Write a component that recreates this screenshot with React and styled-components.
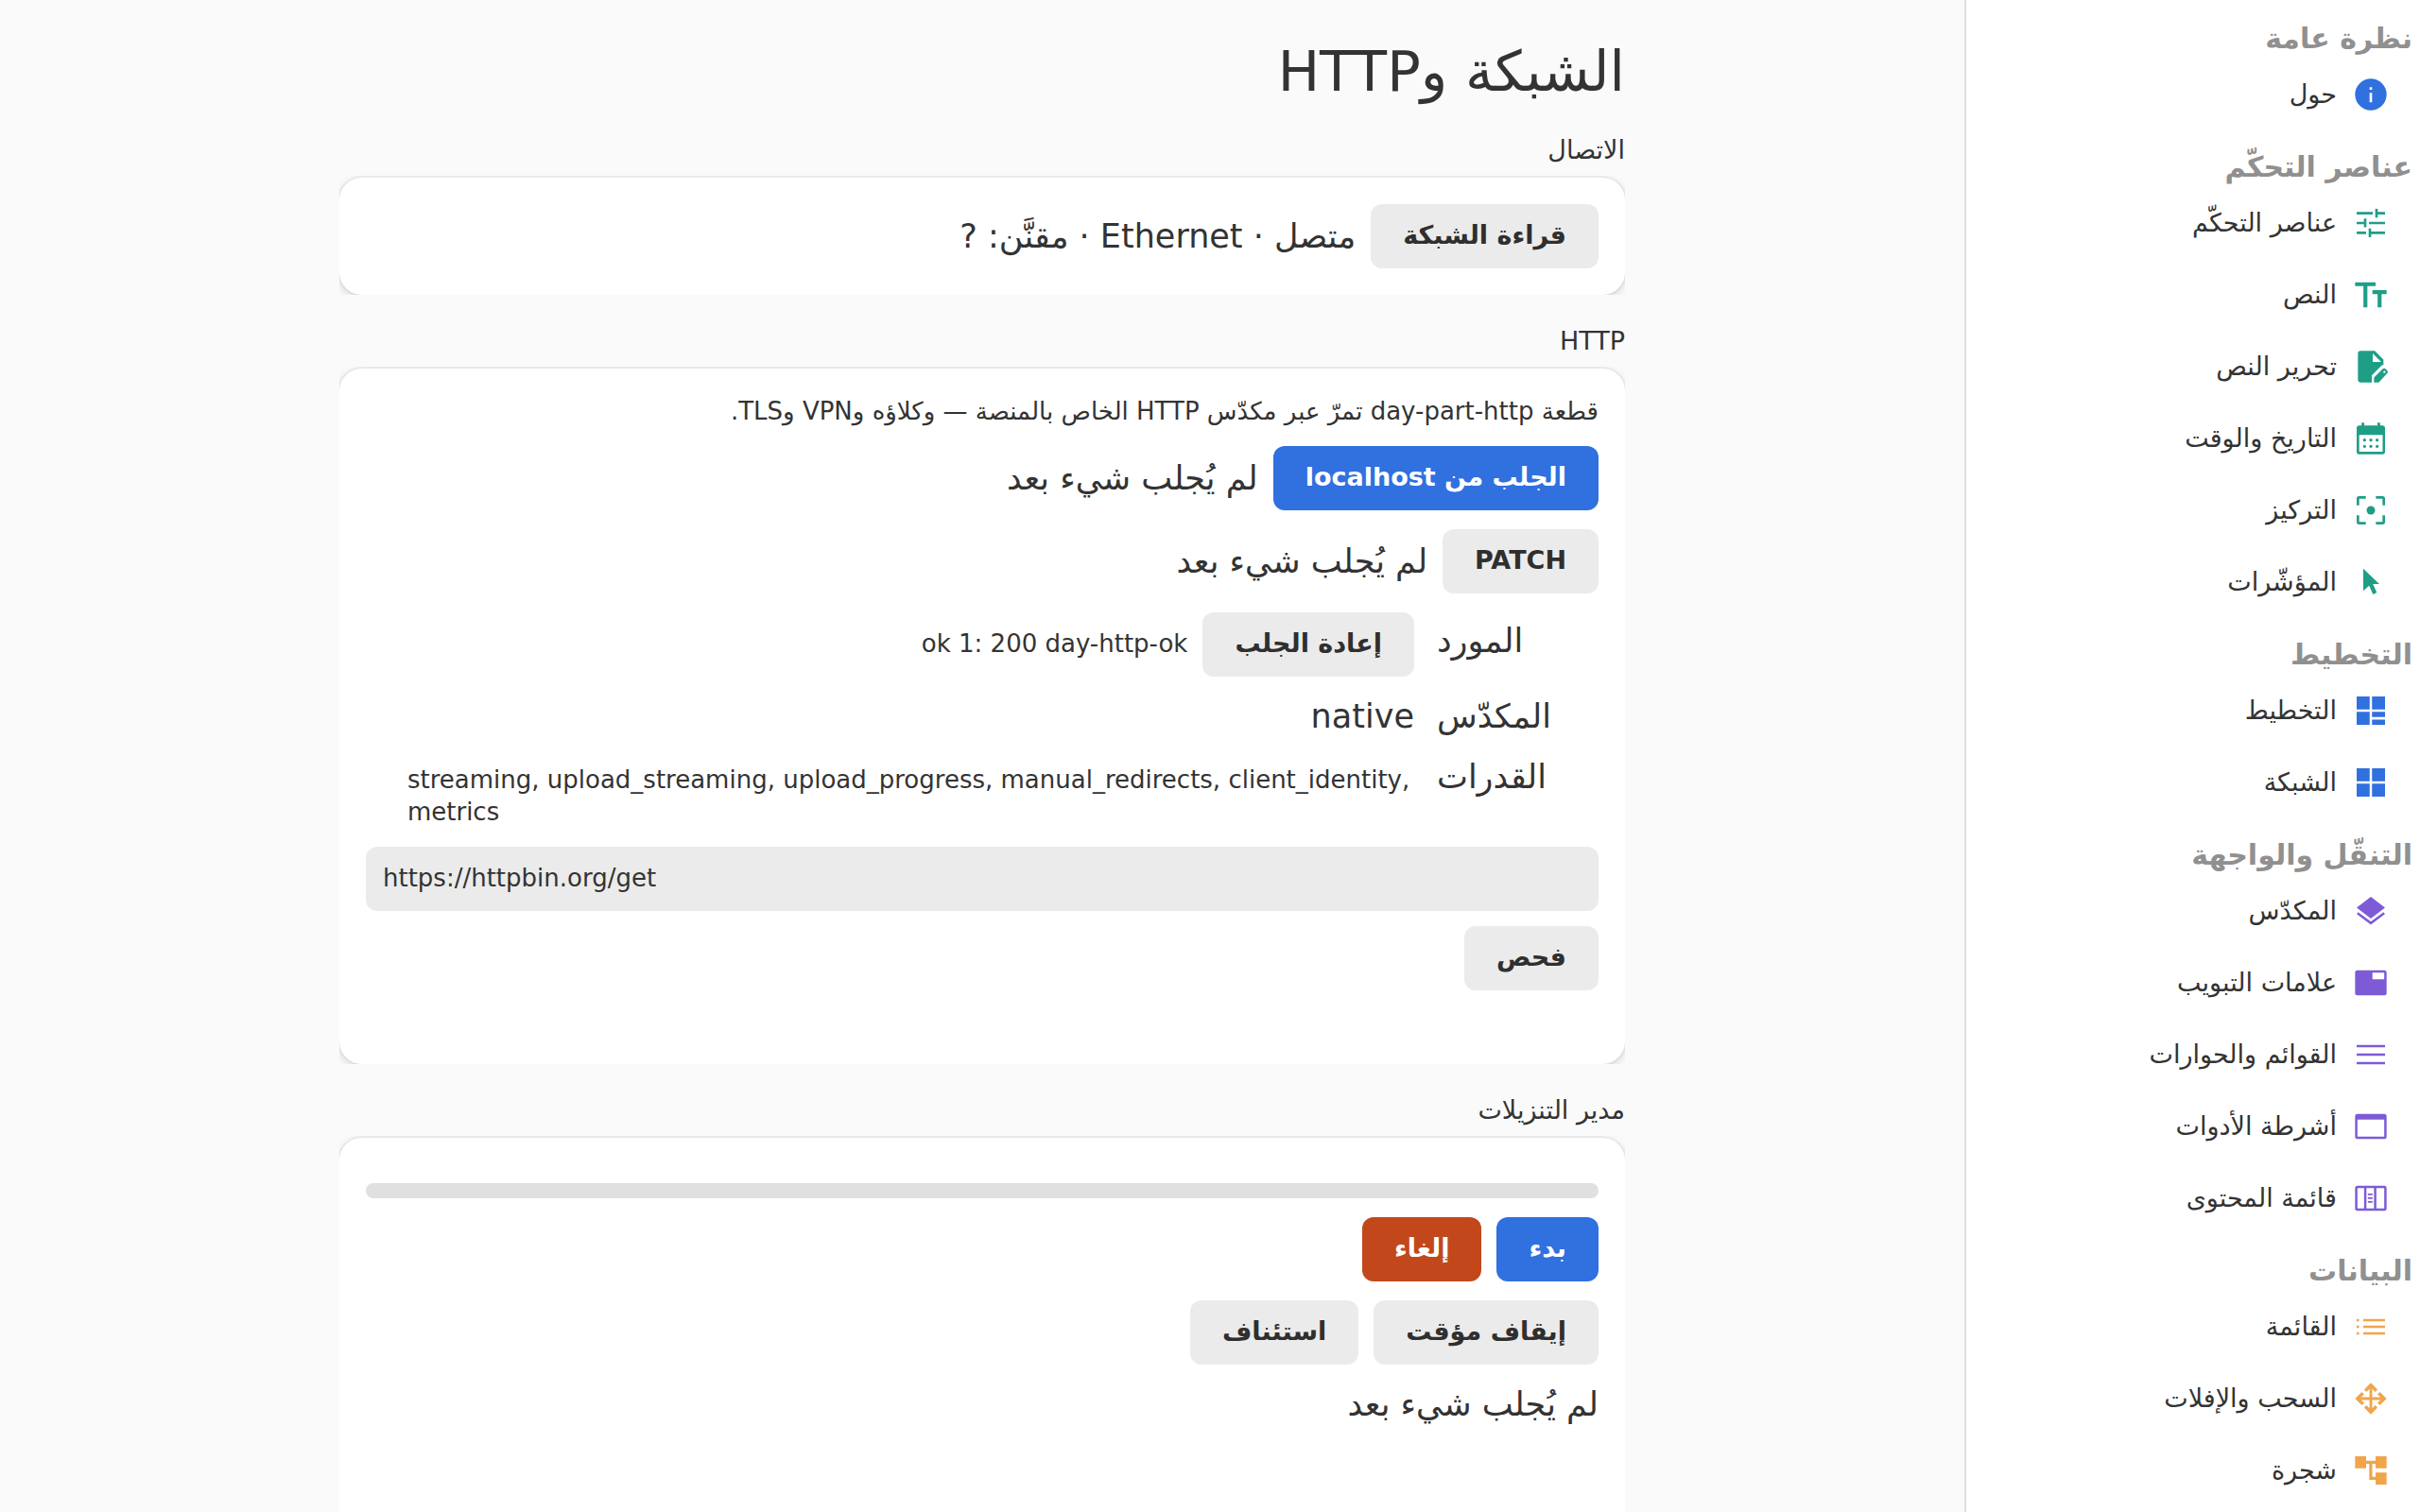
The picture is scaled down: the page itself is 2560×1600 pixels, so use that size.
import React, { useState } from 'react';
import styled, { createGlobalStyle } from 'styled-components';

const blue = '#3070df';
const green = '#1f9e87';
const purple = '#7d5bd7';
const orange = '#f0a54b';

const icons = {
  info: (
    <>
      <circle cx="12" cy="12" r="10" />
      <path fill="#fff" d="M11.2 11h1.6v6h-1.6zM11.2 7.4h1.6V9h-1.6z" />
    </>
  ),
  tune: (
    <path d="M3 5h10.2v1.6H3zM14.8 3h1.6v2H21v1.6h-4.6v2h-1.6zM3 11.2h4.6v-2h1.6v5.5H7.6v-1.9H3zM10.8 11.2H21v1.6H10.8zM3 17.4h6V19H3zM10.6 15.4h1.6v2H21V19h-8.8v2h-1.6z" />
  ),
  text: (
    <path d="M7.3 20V6.5H2V4h13v2.5H9.8V20zM16.3 20v-8.5H13V9h9v2.5h-3.2V20z" />
  ),
  editDocument: (
    <path
      fillRule="evenodd"
      d="M5.5 2h9L20 7.5v3.3c-.6.1-1.1.4-1.6.9l-5.8 5.9V22H5.5A1.7 1.7 0 0 1 3.8 20.3V3.7A1.7 1.7 0 0 1 5.5 2zM13.2 3.6V9h5.4zM14 22v-3.1l5.6-5.5c.5-.5 1.2-.5 1.7 0l1.1 1.1c.5.5.5 1.2 0 1.7L17 22zM20.5 16.2l.9-.9-.8-.8-.9.9z"
    />
  ),
  calendar: (
    <path
      fillRule="evenodd"
      d="M6.1 2h1.7v1.7h8.4V2h1.7v1.7h1.6A1.6 1.6 0 0 1 21 5.300v15.100a1.600 1.600 0 0 1-1.600 1.600H4.600A1.600 1.600 0 0 1 3 20.400V5.300a1.600 1.600 0 0 1 1.600-1.600h1.500zM4.600 9.700v10.700h14.900V9.700zM8 12a1 1 0 1 0 0 2 1 1 0 0 0 0-2zM12 12a1 1 0 1 0 0 2 1 1 0 0 0 0-2zM16 12a1 1 0 1 0 0 2 1 1 0 0 0 0-2zM8 16a1 1 0 1 0 0 2 1 1 0 0 0 0-2zM12 16a1 1 0 1 0 0 2 1 1 0 0 0 0-2zM16 16a1 1 0 1 0 0 2 1 1 0 0 0 0-2z"
    />
  ),
  focus: (
    <>
      <circle cx="12" cy="12" r="2.7" />
      <path
        fill="none"
        stroke="currentColor"
        strokeWidth="1.6"
        d="M3.8 8.8V4.6q0-.8.8-.8h4.2M15.2 3.8h4.2q.8 0 .8.8v4.2M20.2 15.2v4.2q0 .8-.8.8h-4.2M8.8 20.2H4.6q-.8 0-.8-.8v-4.2"
      />
    </>
  ),
  pointer: <path d="M7.2 3.4 17.4 13.2h-4.1l2.5 5.4-2.4 1.2-2.5-5.5-3.7 3.2z" />,
  dashboard: (
    <path d="M3 3h8.250v8.250H3zM12.750 3H21v8.250h-8.250zM3 12.750h8.250V21H3zM12.750 12.750H21V16h-8.250zM12.750 17.750H21V21h-8.250z" />
  ),
  grid: (
    <path d="M3 3h8.250v8.250H3zM12.750 3H21v8.250h-8.250zM3 12.750h8.250V21H3zM12.750 12.750H21V21h-8.250z" />
  ),
  layers: (
    <>
      <path d="m12 3 9 6.900-9 6.900-9-6.900z" />
      <path
        fill="none"
        stroke="currentColor"
        strokeWidth="1.5"
        d="m3.500 13.300 8.500 6.400 8.500-6.400"
      />
    </>
  ),
  tab: (
    <path
      fillRule="evenodd"
      d="M3.500 4h17A1.500 1.500 0 0 1 22 5.500v13a1.500 1.500 0 0 1-1.500 1.500h-17A1.500 1.500 0 0 1 2 18.500v-13A1.500 1.500 0 0 1 3.500 4zM13 5.500v4.300h7.500V5.500z"
    />
  ),
  menu: <path d="M3 5.900h18v1.500H3zM3 11.250h18v1.500H3zM3 16.600h18v1.500H3z" />,
  toolbar: (
    <path
      fillRule="evenodd"
      d="M3.500 4h17A1.500 1.500 0 0 1 22 5.500v13a1.500 1.500 0 0 1-1.500 1.500h-17A1.500 1.500 0 0 1 2 18.500v-13A1.500 1.500 0 0 1 3.500 4zM3.500 7.600v10.900h17V7.600z"
    />
  ),
  columns: (
    <path
      fillRule="evenodd"
      d="M3.500 4h17A1.500 1.500 0 0 1 22 5.500v13a1.500 1.500 0 0 1-1.500 1.500h-17A1.500 1.500 0 0 1 2 18.500v-13A1.500 1.500 0 0 1 3.500 4zM3.500 5.500v13h4.200v-13zM9.200 5.500v13H14v-13zM15.500 5.500v13h5v-13zM10.100 9h3v1.100h-3zM10.100 11.400h3v1.100h-3zM10.100 13.800h3v1.100h-3z"
    />
  ),
  list: (
    <path d="M3 7h1.500v1.500H3zM7.200 7H21v1.500H7.200zM3 11.250h1.500v1.500H3zM7.200 11.250H21v1.500H7.200zM3 15.500h1.500V17H3zM7.200 15.500H21V17H7.200z" />
  ),
  move: (
    <g fill="none" stroke="currentColor">
      <path strokeWidth="1.7" d="M12 3v18M3 12h18" />
      <path
        strokeWidth="2.1"
        d="M8.500 7 12 3.500 15.500 7M8.500 17l3.500 3.500 3.500-3.500M7 8.500 3.500 12 7 15.500M17 8.500l3.500 3.500-3.500 3.500"
      />
    </g>
  ),
  tree: (
    <path d="M2 3h7v2.900h6V3h7v7.700h-7V7.800h-2.100v8.300H15v-2.800h7V21h-7v-3h-4V7.800H9v2.900H2z" />
  ),
};

const sections = [
  {
    title: 'نظرة عامة',
    color: blue,
    items: [['info', 'حول']],
  },
  {
    title: 'عناصر التحكّم',
    color: green,
    items: [
      ['tune', 'عناصر التحكّم'],
      ['text', 'النص'],
      ['editDocument', 'تحرير النص'],
      ['calendar', 'التاريخ والوقت'],
      ['focus', 'التركيز'],
      ['pointer', 'المؤشّرات'],
    ],
  },
  {
    title: 'التخطيط',
    color: blue,
    items: [
      ['dashboard', 'التخطيط'],
      ['grid', 'الشبكة'],
    ],
  },
  {
    title: 'التنقّل والواجهة',
    color: purple,
    items: [
      ['layers', 'المكدّس'],
      ['tab', 'علامات التبويب'],
      ['menu', 'القوائم والحوارات'],
      ['toolbar', 'أشرطة الأدوات'],
      ['columns', 'قائمة المحتوى'],
    ],
  },
  {
    title: 'البيانات',
    color: orange,
    items: [
      ['list', 'القائمة'],
      ['move', 'السحب والإفلات'],
      ['tree', 'شجرة'],
    ],
  },
];

const nothingYet = 'لم يُجلب شيء بعد';

export default function App() {
  const [url, setUrl] = useState('https://httpbin.org/get');

  return (
    <>
      <GlobalStyle />
      <Window dir="rtl" lang="ar">
        <Sidebar>
          {sections.map((section) => (
            <section key={section.title}>
              <SectionTitle>{section.title}</SectionTitle>
              {section.items.map(([icon, label]) => (
                <NavItem key={icon} href={`#${icon}`}>
                  <Icon viewBox="0 0 24 24" $color={section.color} aria-hidden="true">
                    {icons[icon]}
                  </Icon>
                  {label}
                </NavItem>
              ))}
            </section>
          ))}
        </Sidebar>

        <Main>
          <Column>
            <Title>الشبكة وHTTP</Title>

            <Group>
              <Caption>الاتصال</Caption>
              <Card>
                <Row>
                  <Button>قراءة الشبكة</Button>
                  <Body>متصل · Ethernet · مقنَّن: ?</Body>
                </Row>
              </Card>
            </Group>

            <Group>
              <Caption>HTTP</Caption>
              <Card>
                <Small>
                  قطعة day-part-http تمرّ عبر مكدّس HTTP الخاص بالمنصة — وكلاؤه وVPN
                  وTLS.
                </Small>
                <Row>
                  <Button $variant="primary">الجلب من localhost</Button>
                  <Body>{nothingYet}</Body>
                </Row>
                <Row>
                  <Button>PATCH</Button>
                  <Body>{nothingYet}</Body>
                </Row>
                <Form>
                  <Term>المورد</Term>
                  <Value>
                    <Button>إعادة الجلب</Button>
                    <Small dir="ltr">ok 1: 200 day-http-ok</Small>
                  </Value>
                  <Term>المكدّس</Term>
                  <Value>
                    <Body>native</Body>
                  </Value>
                  <Term>القدرات</Term>
                  <Value>
                    <Small dir="ltr">
                      streaming, upload_streaming, upload_progress, manual_redirects,
                      client_identity, metrics
                    </Small>
                  </Value>
                </Form>
                <Probe>
                  <Input
                    dir="ltr"
                    type="text"
                    aria-label="URL"
                    value={url}
                    onChange={(e) => setUrl(e.target.value)}
                  />
                  <Row>
                    <Button>فحص</Button>
                  </Row>
                  <Small role="status" />
                </Probe>
              </Card>
            </Group>

            <Group>
              <Caption>مدير التنزيلات</Caption>
              <Card $tall>
                <Progress role="progressbar" aria-valuenow={0} />
                <Row>
                  <Button $variant="primary">بدء</Button>
                  <Button $variant="danger">إلغاء</Button>
                </Row>
                <Row>
                  <Button>إيقاف مؤقت</Button>
                  <Button>استئناف</Button>
                </Row>
                <Body>{nothingYet}</Body>
              </Card>
            </Group>
          </Column>
        </Main>
      </Window>
    </>
  );
}

const GlobalStyle = createGlobalStyle`
  * {
    box-sizing: border-box;
  }
  body {
    margin: 0;
    background: #fafafa;
    color: #333333;
    font-family: 'DejaVu Sans', sans-serif;
  }
  h1, h2, p, dl, dd {
    margin: 0;
  }
  button, input {
    font-family: inherit;
  }
`;

const Window = styled.div`
  display: flex;
  height: 100vh;
  overflow: hidden;
`;

const Sidebar = styled.nav`
  flex: 0 0 482px;
  padding-top: 2px;
  overflow: hidden;
  background: #ffffff;
  border-left: 2px solid #dedede;
`;

const SectionTitle = styled.h2`
  height: 60px;
  padding: 20px 8px 0;
  color: #909090;
  font-size: 30px;
  font-weight: bold;
  line-height: 38px;
`;

const NavItem = styled.a`
  display: flex;
  align-items: center;
  gap: 16px;
  height: 76px;
  padding: 0 32px;
  color: inherit;
  font-size: 27px;
  line-height: 34px;
  text-decoration: none;
`;

const Icon = styled.svg`
  width: 40px;
  height: 40px;
  color: ${(props) => props.$color};
  fill: currentColor;
`;

const Main = styled.main`
  flex: 1;
  min-width: 0;
  overflow: hidden;
`;

const Column = styled.div`
  display: flex;
  flex-direction: column;
  gap: 32px;
  max-width: 1360px;
  margin: 0 auto;
  padding-top: 42px;
`;

const Title = styled.h1`
  font-size: 59px;
  font-weight: normal;
  line-height: 68px;
`;

const Group = styled.section`
  display: flex;
  flex-direction: column;
  gap: 12px;
`;

const Caption = styled.h2`
  font-size: 27px;
  font-weight: normal;
  line-height: 34px;
`;

/* the shadow is cut at the sides and the bottom, only the corners keep it */
const Card = styled.div`
  display: flex;
  flex-direction: column;
  gap: 20px;
  padding: 28px;
  padding-bottom: ${(props) => (props.$tall ? '160px' : '28px')};
  background: #ffffff;
  border-radius: 24px;
  box-shadow: 0 0 0 2px rgba(0, 0, 0, 0.03), 0 2px 6px 2px rgba(0, 0, 0, 0.07),
    0 4px 12px 4px rgba(0, 0, 0, 0.03);
  clip-path: inset(-2px 0 0 0);
`;

const Row = styled.div`
  display: flex;
  align-items: center;
  gap: 16px;
`;

const Body = styled.p`
  font-size: 35px;
  line-height: 44px;
`;

const Small = styled.p`
  min-height: 34px;
  font-size: 26px;
  line-height: 34px;
`;

const buttonColors = {
  plain: 'background: #ebebeb; color: #2f2f2f;',
  primary: `background: ${blue}; color: #ffffff;`,
  danger: 'background: #c2481c; color: #ffffff;',
};

const Button = styled.button`
  height: 68px;
  padding: 0 34px 2px;
  border: none;
  border-radius: 12px;
  font-size: 27px;
  font-weight: bold;
  line-height: 34px;
  cursor: pointer;
  ${(props) => buttonColors[props.$variant || 'plain']}
`;

const Form = styled.dl`
  display: grid;
  grid-template-columns: max-content minmax(0, 1065px);
  align-items: baseline;
  gap: 20px 24px;
  padding-right: 50px;
`;

const Term = styled.dt`
  font-size: 35px;
  line-height: 44px;
  text-align: left;
`;

const Value = styled.dd`
  display: flex;
  align-items: baseline;
  gap: 16px;
`;

const Probe = styled.div`
  display: flex;
  flex-direction: column;
  gap: 16px;
`;

const Input = styled.input`
  width: 100%;
  height: 68px;
  padding: 0 18px 2px;
  border: none;
  border-radius: 12px;
  outline: none;
  background: #ebebeb;
  color: inherit;
  font-size: 26px;
`;

const Progress = styled.div`
  height: 16px;
  margin-top: 20px;
  border-radius: 8px;
  background: #e0e0e0;
`;
